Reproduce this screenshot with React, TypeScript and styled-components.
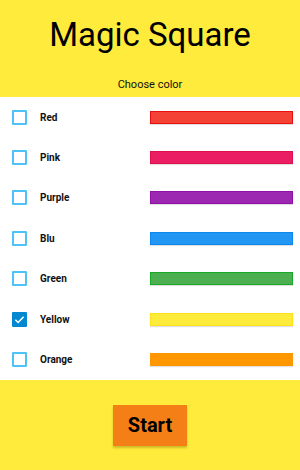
import React, { useState } from "react";
import styled, { createGlobalStyle } from "styled-components";

const GlobalStyle = createGlobalStyle`
  html, body {
    margin: 0;
    padding: 0;
    background: #ffffff;
    font-family: Roboto, "Liberation Sans", sans-serif;
  }
`;

const Screen = styled.div`
  width: 300px;
  height: 470px;
  display: flex;
  flex-direction: column;
  background: #ffffff;
`;

const Header = styled.header`
  height: 97px;
  background: #ffeb3b;
  display: flex;
  flex-direction: column;
  align-items: center;
  box-sizing: border-box;
  padding-top: 16px;
`;

const Title = styled.h1`
  margin: 0;
  font-size: 33px;
  font-weight: 400;
  color: #000;
  line-height: 37px;
`;

const Subtitle = styled.p`
  margin: 25px 0 0;
  font-size: 11px;
  line-height: 14px;
  color: #111;
`;

const List = styled.ul`
  list-style: none;
  margin: 0;
  padding: 0;
`;

const Row = styled.li`
  height: 40.4px;
  display: flex;
  align-items: center;
  padding: 0 7px 0 12px;
`;

const Box = styled.span<{ $checked: boolean }>`
  width: 15px;
  height: 15px;
  box-sizing: border-box;
  border: 2px solid ${(p) => (p.$checked ? "#0288d1" : "#4fc3f7")};
  background: ${(p) => (p.$checked ? "#0288d1" : "#fff")};
  border-radius: 1px;
  display: flex;
  align-items: center;
  justify-content: center;
  cursor: pointer;
`;

const Label = styled.span`
  margin-left: 13px;
  width: 110px;
  font-size: 10px;
  font-weight: 700;
  color: #111;
`;

const Swatch = styled.span<{ $fill: string; $edge: string }>`
  flex: 1;
  height: 13px;
  box-sizing: border-box;
  background: ${(p) => p.$fill};
  border: 1px solid ${(p) => p.$edge};
  box-shadow: 0 1px 1px rgba(0, 0, 0, 0.12);
`;

const Footer = styled.footer`
  flex: 1;
  background: #ffeb3b;
  display: flex;
  justify-content: center;
  align-items: flex-start;
  padding-top: 25px;
`;

const StartButton = styled.button`
  width: 74px;
  height: 41px;
  border: none;
  background: #f57f17;
  color: #000;
  font-family: Roboto, "Liberation Sans", sans-serif;
  font-size: 20px;
  font-weight: 700;
  box-shadow: 0 2px 2px rgba(120, 100, 0, 0.35);
  cursor: pointer;
`;

const colors = [
  { name: "Red", fill: "#f44336", edge: "#e81010" },
  { name: "Pink", fill: "#e91e63", edge: "#e0104e" },
  { name: "Purple", fill: "#9c27b0", edge: "#9010a8" },
  { name: "Blu", fill: "#2196f3", edge: "#0a88ee" },
  { name: "Green", fill: "#4caf50", edge: "#1aa828" },
  { name: "Yellow", fill: "#ffeb3b", edge: "#ffe21a" },
  { name: "Orange", fill: "#ff9800", edge: "#ff9800" },
];

const Check = () => (
  <svg width="11" height="11" viewBox="0 0 24 24">
    <path d="M3 12.5l6 6L21 6" fill="none" stroke="#fff" strokeWidth="3.4" />
  </svg>
);

export default function App() {
  const [picked, setPicked] = useState<string[]>(["Yellow"]);
  const toggle = (n: string) =>
    setPicked((p) => (p.includes(n) ? p.filter((x) => x !== n) : [...p, n]));

  return (
    <>
      <GlobalStyle />
      <Screen>
        <Header>
          <Title>Magic Square</Title>
          <Subtitle>Choose color</Subtitle>
        </Header>
        <List>
          {colors.map((c) => {
            const on = picked.includes(c.name);
            return (
              <Row key={c.name}>
                <Box $checked={on} onClick={() => toggle(c.name)}>
                  {on && <Check />}
                </Box>
                <Label>{c.name}</Label>
                <Swatch $fill={c.fill} $edge={c.edge} />
              </Row>
            );
          })}
        </List>
        <Footer>
          <StartButton>Start</StartButton>
        </Footer>
      </Screen>
    </>
  );
}
